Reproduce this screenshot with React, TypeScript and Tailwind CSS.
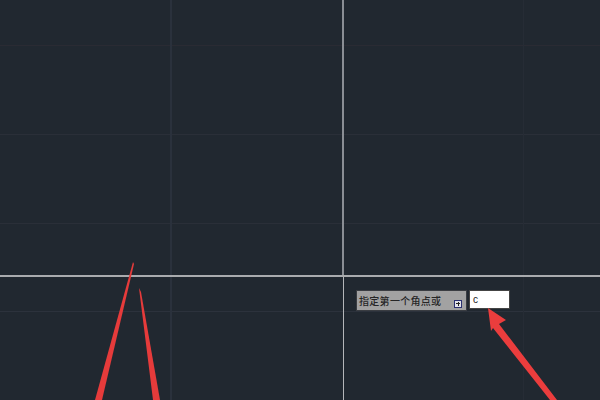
import React from "react";

export default function App() {
  return (
    <div className="relative w-[600px] h-[400px] overflow-hidden bg-[#212830]" style={{ fontFamily: '"Noto Sans CJK SC", "Liberation Sans", sans-serif' }}>
      {/* grid lines */}
      <div className="absolute left-0 top-[45px] w-full h-px bg-[#2a2b33]" />
      <div className="absolute left-0 top-[134px] w-full h-px bg-[#2a2f38]" />
      <div className="absolute left-0 top-[223px] w-full h-px bg-[#2a2f38]" />
      <div className="absolute left-0 top-[311px] w-full h-px bg-[#2c323c]" />
      <div className="absolute top-0 left-[170px] h-full w-[2px] bg-[#2a313c]" />
      <div className="absolute top-0 left-[523px] h-full w-px bg-[#262c35]" />
      {/* crosshair */}
      <div className="absolute top-0 left-[342px] h-[275px] w-[2px] bg-[#8a8e94]" />
      <div className="absolute top-[275px] left-[343px] h-[125px] w-px bg-[#b4b6b9]" />
      <div className="absolute left-0 top-[275px] w-full h-[2px] bg-[#a9abae]" />

      {/* tooltip */}
      <div className="absolute left-[356px] top-[290px] flex items-start gap-[2px]">
        <div className="w-[111px] h-[21px] bg-[#a2a2a2] border border-[#3a3d42] flex items-center pl-[2px] pr-[4px]">
          <span className="text-[10px] font-medium leading-none text-[#262626] tracking-[0.3px] whitespace-nowrap">指定第一个角点或</span>
          <div className="ml-auto mt-[6px] w-[8px] h-[8px] bg-[#e4e4ec] border border-[#2a3070] relative flex items-center justify-center">
            <div className="w-[4px] h-px bg-[#222]" />
            <div className="absolute w-px h-[4px] bg-[#222]" />
          </div>
        </div>
        <div className="w-[41px] h-[19px] bg-white border border-[#444] flex items-center pl-[3px]">
          <span className="text-[10px] leading-none text-[#222]" style={{ fontFamily: '"Liberation Sans", sans-serif' }}>c</span>
        </div>
      </div>

      {/* red arrows */}
      <svg className="absolute inset-0" width="600" height="400" viewBox="0 0 600 400">
        <polygon points="133,262 134,264 102,400 95,400" fill="#e63b3b" />
        <polygon points="139,288 141,292 160,400 153,400" fill="#e63b3b" />
        <polygon points="488,308 506,320 499,324 557,400 550,400 493,328 491,331" fill="#eb3d3d" />
      </svg>
    </div>
  );
}
